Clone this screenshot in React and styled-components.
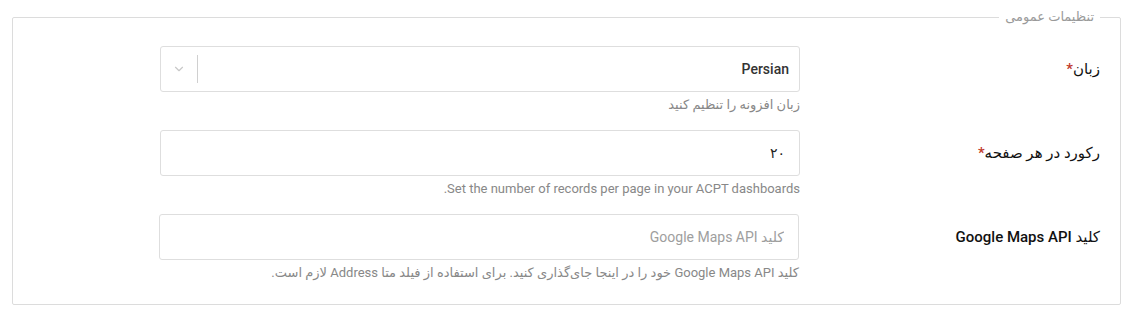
import React from 'react'
import styled, { createGlobalStyle } from 'styled-components'

const Global = createGlobalStyle`
  body {
    margin: 0;
    background: #fff;
    font-family: Roboto, "DejaVu Sans", sans-serif;
    color: #222;
  }
`

const Page = styled.div`
  direction: rtl;
  padding: 9px 10px 0 12px;
`

const Box = styled.fieldset`
  margin: 0;
  border: 1px solid #dcdcdc;
  border-radius: 2px;
  padding: 21px 20px 23px 0;
  min-width: 0;
`

const Legend = styled.legend`
  font-size: 13px;
  color: #9a9a9a;
  padding: 0 6px;
  margin-right: 0;
  line-height: 16px;
`

const Row = styled.div`
  display: grid;
  grid-template-columns: 300px 640px;
  margin-bottom: ${p => p.$last ? '0' : '17px'};
`

const Label = styled.label`
  height: 45px;
  display: flex;
  align-items: center;
  font-size: 15px;
  font-weight: 500;
  color: #111;
`

const Star = styled.span`
  color: #c0392b;
`

const Field = styled.div`
  display: flex;
  flex-direction: column;
  margin-right: ${p => p.$shift || 0}px;
  margin-left: -${p => p.$shift || 0}px;
`

const Input = styled.input`
  box-sizing: border-box;
  height: 46px;
  width: 100%;
  border: 1px solid #dedede;
  border-radius: 3px;
  padding: 0 14px;
  font-family: inherit;
  font-size: 14px;
  color: #222;
  direction: rtl;
  outline: none;
  &::placeholder { color: #9e9e9e; }
`

const Select = styled.div`
  box-sizing: border-box;
  height: 46px;
  border: 1px solid #dedede;
  border-radius: 3px;
  display: flex;
  align-items: center;
  padding-right: 10px;
`

const Value = styled.div`
  flex: 1;
  font-size: 14px;
  font-weight: 500;
  color: #333;
`

const Sep = styled.span`
  width: 1px;
  align-self: stretch;
  margin: 8px 0;
  background: #d0d0d0;
`

const Chevron = styled.div`
  width: 36px;
  display: flex;
  justify-content: center;
  color: #c8c8c8;
`

const Help = styled.div`
  margin-top: 5px;
  font-size: 13px;
  line-height: 16px;
  color: #888;
`

export default function App() {
  return (
    <Page>
      <Global />
      <Box>
        <Legend>تنظیمات عمومی</Legend>
        <Row>
          <Label>زبان<Star>*</Star></Label>
          <Field>
            <Select>
              <Value>Persian</Value>
              <Sep />
              <Chevron>
                <svg width="14" height="14" viewBox="0 0 24 24" fill="none" stroke="currentColor" strokeWidth="2" strokeLinecap="round" strokeLinejoin="round">
                  <path d="M6 9l6 6 6-6" />
                </svg>
              </Chevron>
            </Select>
            <Help>زبان افزونه را تنظیم کنید</Help>
          </Field>
        </Row>
        <Row>
          <Label>رکورد در هر صفحه<Star>*</Star></Label>
          <Field>
            <Input defaultValue="۲۰" />
            <Help>Set the number of records per page in your ACPT dashboards.</Help>
          </Field>
        </Row>
        <Row $last>
          <Label>کلید Google Maps API</Label>
          <Field $shift={1}>
            <Input placeholder="کلید Google Maps API" />
            <Help>کلید Google Maps API خود را در اینجا جای‌گذاری کنید. برای استفاده از فیلد متا Address لازم است.</Help>
          </Field>
        </Row>
      </Box>
    </Page>
  )
}
